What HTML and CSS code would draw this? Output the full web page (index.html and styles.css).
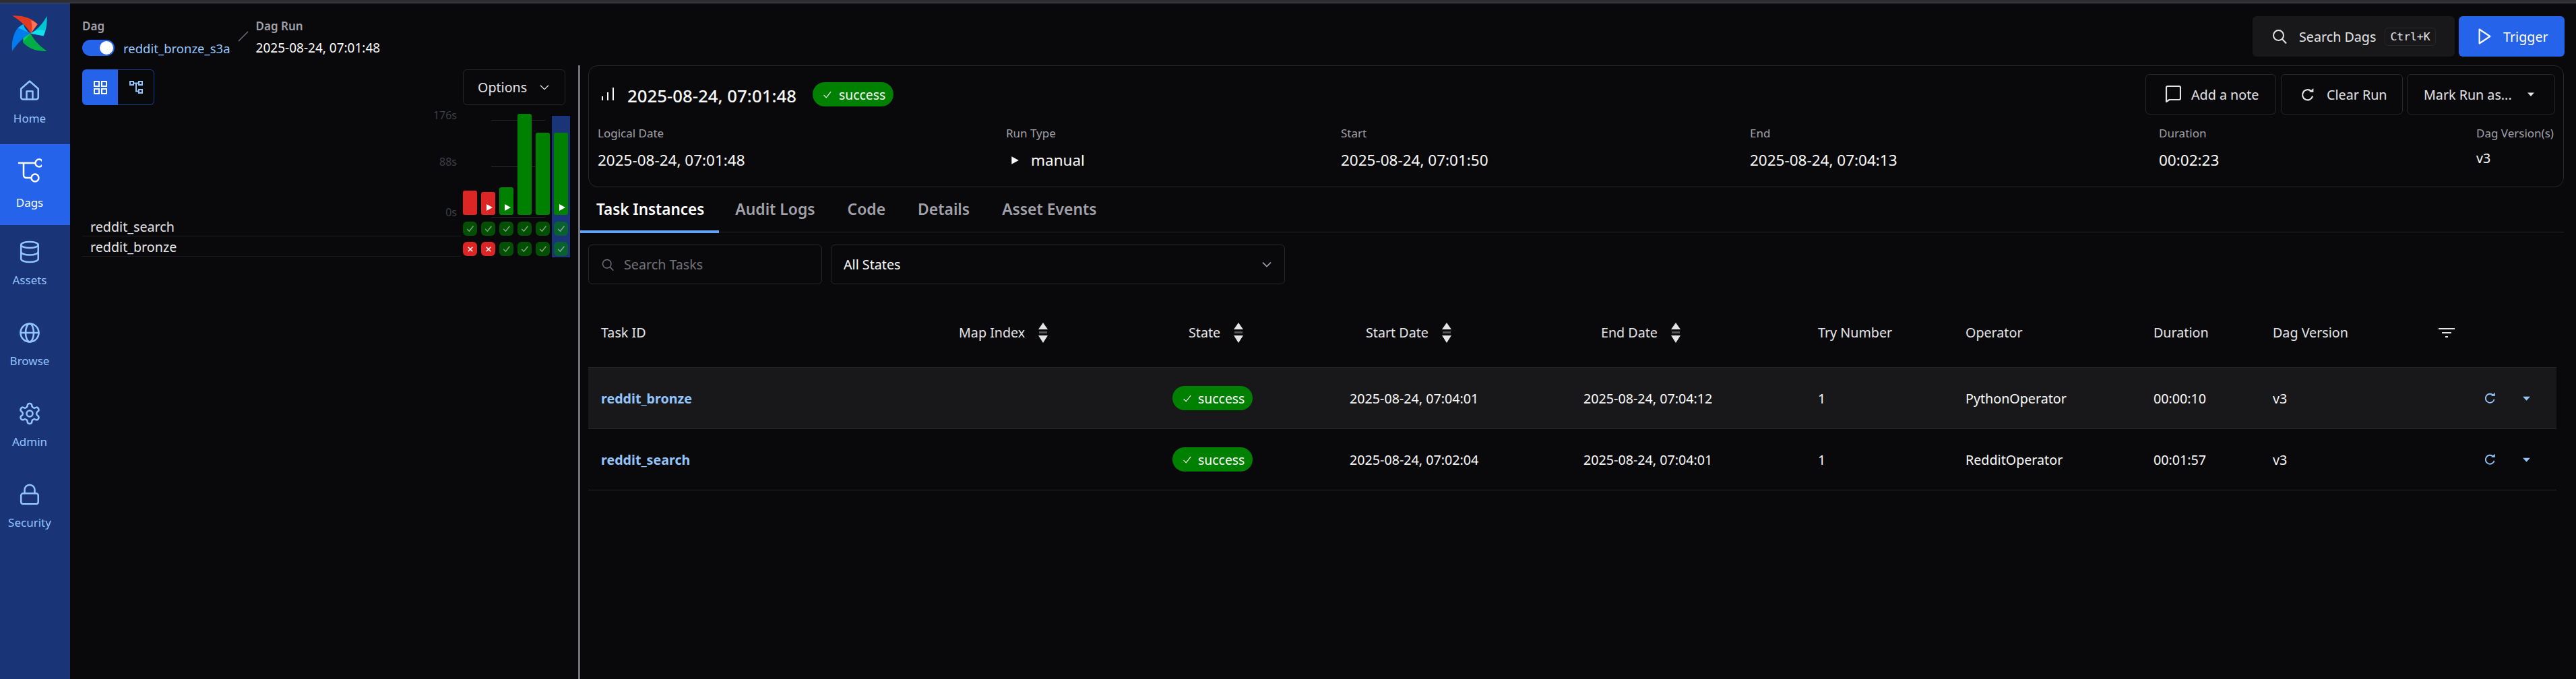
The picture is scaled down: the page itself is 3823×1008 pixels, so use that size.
FILE: index.html
```html
<!DOCTYPE html>
<html>
<head>
  <meta charset="UTF-8">
  <title>reddit_bronze_s3a - Dag Run</title>
  <link rel="stylesheet" href="styles.css">
</head>
<body>
  <svg class="sprite" xmlns="http://www.w3.org/2000/svg">
    <symbol id="i-search" viewBox="0 0 24 24"><circle cx="10.5" cy="10.5" r="7.5"/><path d="M16 16l6 6.5"/></symbol>
    <symbol id="i-check" viewBox="0 0 24 24"><path d="M4 13l6 6L21 5"/></symbol>
    <symbol id="i-x" viewBox="0 0 24 24"><path d="M4 4l16 16M20 4L4 20"/></symbol>
    <symbol id="i-reload" viewBox="0 0 24 24"><path d="M19.5 14.5A8.7 8.7 0 1 1 17 6"/><path class="solid" d="M13.5 7.5L21 8V1z"/></symbol>
    <symbol id="i-caret" viewBox="0 0 24 24"><path class="solid" d="M2 7h20L12 18z"/></symbol>
    <symbol id="i-chevron" viewBox="0 0 24 24"><path d="M3 7l9 9 9-9"/></symbol>
    <symbol id="i-play" viewBox="0 0 24 24"><path class="solid" d="M4 2l18 10L4 22z"/></symbol>
    <symbol id="i-sort" viewBox="0 0 16 32"><path class="solid" d="M8 1l7 10H1zM1 20h14L8 31z"/><path class="solid" d="M2 14h12v3H2z" opacity=".35"/></symbol>
  </svg>

  <div class="window-strip"></div>

  <div class="app">
    <nav class="sidebar">
      <div class="logo">
        <svg viewBox="52 66 162 166" width="54" height="55">
          <path fill="#e43921" d="M55 70C105 68 145 82 168 108L138 150C118 115 90 92 55 70z"/>
          <path fill="#ff7557" d="M138 150L168 108C160 100 150 94 138 90C146 110 146 132 138 150z"/>
          <path fill="#00c7d4" d="M210 72C212 105 208 135 195 160L138 150C170 130 192 105 210 72z"/>
          <path fill="#11e1ee" d="M138 150L195 160C198 152 201 146 203 138C180 130 158 134 138 150z"/>
          <path fill="#00ad46" d="M210 228C165 232 130 218 103 190L138 150C155 185 180 208 210 228z"/>
          <path fill="#04d659" d="M138 150L103 190C108 176 98 160 100 150C115 142 128 144 138 150z"/>
          <path fill="#017cee" d="M55 228C50 190 60 150 80 125L138 150C105 165 78 195 55 228z"/>
          <path fill="#0cb6ff" d="M138 150L80 125C88 118 95 112 105 108C110 125 122 142 138 150z"/>
        </svg>
      </div>
      <a class="nav-item">
        <svg class="nav-icon" viewBox="0 0 24 24"><path d="M3.5 10.5L12 3l8.500 7.500V19a2 2 0 0 1-2 2h-13a2 2 0 0 1-2-2z"/><path d="M9 21v-8h6v8"/></svg>
        <span>Home</span>
      </a>
      <a class="nav-item active">
        <svg class="nav-icon" viewBox="0 0 36 36"><path d="M2 7h24M9 7v18a4 4 0 0 0 4 4h7"/><circle cx="32" cy="7" r="5.500"/><circle cx="26" cy="29" r="5.500"/></svg>
        <span>Dags</span>
      </a>
      <a class="nav-item">
        <svg class="nav-icon" viewBox="0 0 24 24"><ellipse cx="12" cy="5" rx="8.500" ry="3"/><path d="M3.500 5v14a8.500 3 0 0 0 17 0V5"/><path d="M3.500 12a8.500 3 0 0 0 17 0"/></svg>
        <span>Assets</span>
      </a>
      <a class="nav-item">
        <svg class="nav-icon" viewBox="0 0 24 24"><circle cx="12" cy="12" r="9"/><ellipse cx="12" cy="12" rx="4" ry="9"/><path d="M3 12h18"/></svg>
        <span>Browse</span>
      </a>
      <a class="nav-item">
        <svg class="nav-icon" viewBox="0 0 24 24"><path d="M12.220 2h-.44a2 2 0 0 0-2 2v.18a2 2 0 0 1-1 1.730l-.43.250a2 2 0 0 1-2 0l-.15-.08a2 2 0 0 0-2.730.730l-.22.380a2 2 0 0 0 .730 2.730l.15.100a2 2 0 0 1 1 1.720v.510a2 2 0 0 1-1 1.740l-.15.090a2 2 0 0 0-.730 2.730l.22.380a2 2 0 0 0 2.730.730l.15-.08a2 2 0 0 1 2 0l.43.250a2 2 0 0 1 1 1.730V20a2 2 0 0 0 2 2h.44a2 2 0 0 0 2-2v-.18a2 2 0 0 1 1-1.730l.43-.25a2 2 0 0 1 2 0l.15.08a2 2 0 0 0 2.730-.730l.22-.39a2 2 0 0 0-.730-2.730l-.15-.08a2 2 0 0 1-1-1.740v-.5a2 2 0 0 1 1-1.740l.15-.09a2 2 0 0 0 .730-2.730l-.22-.38a2 2 0 0 0-2.730-.730l-.15.08a2 2 0 0 1-2 0l-.43-.25a2 2 0 0 1-1-1.730V4a2 2 0 0 0-2-2z"/><circle cx="12" cy="12" r="3"/></svg>
        <span>Admin</span>
      </a>
      <a class="nav-item">
        <svg class="nav-icon" viewBox="0 0 24 24"><rect x="3.500" y="11" width="17" height="10.500" rx="2"/><path d="M7 11V7.500a5 5 0 0 1 10 0V11"/></svg>
        <span>Security</span>
      </a>
    </nav>

    <main class="main">
      <header class="topbar">
        <div class="crumbs">
          <div class="crumb">
            <div class="crumb-label">Dag</div>
            <div class="crumb-value">
              <span class="switch"><span class="switch-knob"></span></span>
              <a class="dag-link">reddit_bronze_s3a</a>
            </div>
          </div>
          <svg class="crumb-sep" viewBox="0 0 16 16" width="16" height="16"><path d="M1 15L15 1"/></svg>
          <div class="crumb">
            <div class="crumb-label">Dag Run</div>
            <div class="crumb-value">2025-08-24, 07:01:48</div>
          </div>
        </div>
        <div class="top-actions">
          <button class="search-dags">
            <svg class="icon icon-search"><use href="#i-search"/></svg>
            <span>Search Dags</span>
            <kbd>Ctrl+K</kbd>
          </button>
          <button class="trigger">
            <svg viewBox="0 0 24 30" width="21" height="28"><path d="M3 3l18 12L3 27z"/></svg>
            <span>Trigger</span>
          </button>
        </div>
      </header>

      <div class="content">
        <section class="left-panel">
          <div class="left-toolbar">
            <div class="view-toggle">
              <button class="view-btn selected">
                <svg viewBox="0 0 20 20" width="20" height="20"><rect x="1" y="1" width="7" height="7"/><rect x="12" y="1" width="7" height="7"/><rect x="1" y="12" width="7" height="7"/><rect x="12" y="12" width="7" height="7"/></svg>
              </button>
              <button class="view-btn">
                <svg viewBox="0 0 20 20" width="20" height="20"><rect x="1" y="1" width="5" height="5"/><rect x="14" y="1" width="5" height="5"/><rect x="14" y="13" width="5" height="5"/><path d="M6 3.500h8M10 3.500V15.500h4"/></svg>
              </button>
            </div>
            <button class="options-btn">
              <span>Options</span>
              <svg class="icon icon-options"><use href="#i-chevron"/></svg>
            </button>
          </div>

          <div class="grid-area">
            <div class="tree">
              <div class="axis-label axis-top">176s</div>
              <div class="axis-label axis-mid">88s</div>
              <div class="axis-label axis-low">0s</div>
              <div class="tree-row">reddit_search</div>
              <div class="tree-row">reddit_bronze</div>
            </div>
            <div class="runs">
              <div class="gridline line-top"></div>
              <div class="gridline line-mid"></div>
              <div class="gridline line-low"></div>

              <div class="run">
                <div class="bar-slot"><div class="bar failed" style="height: 36px"></div></div>
                <div class="cell ok"><svg class="icon"><use href="#i-check"/></svg></div>
                <div class="cell bad"><svg class="icon"><use href="#i-x"/></svg></div>
              </div>
              <div class="run">
                <div class="bar-slot"><div class="bar failed" style="height: 34px"><svg class="bar-play"><use href="#i-play"/></svg></div></div>
                <div class="cell ok"><svg class="icon"><use href="#i-check"/></svg></div>
                <div class="cell bad"><svg class="icon"><use href="#i-x"/></svg></div>
              </div>
              <div class="run">
                <div class="bar-slot"><div class="bar" style="height: 41px"><svg class="bar-play"><use href="#i-play"/></svg></div></div>
                <div class="cell ok"><svg class="icon"><use href="#i-check"/></svg></div>
                <div class="cell ok"><svg class="icon"><use href="#i-check"/></svg></div>
              </div>
              <div class="run">
                <div class="bar-slot"><div class="bar" style="height: 150px"></div></div>
                <div class="cell ok"><svg class="icon"><use href="#i-check"/></svg></div>
                <div class="cell ok"><svg class="icon"><use href="#i-check"/></svg></div>
              </div>
              <div class="run">
                <div class="bar-slot"><div class="bar" style="height: 122px"></div></div>
                <div class="cell ok"><svg class="icon"><use href="#i-check"/></svg></div>
                <div class="cell ok"><svg class="icon"><use href="#i-check"/></svg></div>
              </div>
              <div class="run current">
                <div class="bar-slot"><div class="bar" style="height: 122px"><svg class="bar-play"><use href="#i-play"/></svg></div></div>
                <div class="cell ok"><svg class="icon"><use href="#i-check"/></svg></div>
                <div class="cell ok"><svg class="icon"><use href="#i-check"/></svg></div>
              </div>
            </div>
          </div>
        </section>

        <div class="divider"></div>

        <section class="right-panel">
          <div class="run-card">
            <div class="run-card-top">
              <div class="run-title">
                <svg class="run-bars" viewBox="0 0 20 22" width="20" height="22"><path d="M2 20v-6M10 20V8M18 20V1"/></svg>
                <h2>2025-08-24, 07:01:48</h2>
                <span class="badge badge-large"><svg class="icon"><use href="#i-check"/></svg>success</span>
              </div>
              <div class="run-actions">
                <button class="outline-btn btn-note">
                  <svg viewBox="0 0 26 34" width="26" height="34"><path d="M4 28V7a2 2 0 0 1 2-2h17a2 2 0 0 1 2 2v16a2 2 0 0 1-2 2H8.500z"/></svg>
                  <span>Add a note</span>
                </button>
                <button class="outline-btn btn-clear">
                  <svg class="icon icon-reload"><use href="#i-reload"/></svg>
                  <span>Clear Run</span>
                </button>
                <button class="outline-btn btn-mark">
                  <span>Mark Run as...</span>
                  <svg class="icon icon-caret"><use href="#i-caret"/></svg>
                </button>
              </div>
            </div>
            <div class="run-meta">
              <div><div class="meta-label">Logical Date</div><div class="meta-value">2025-08-24, 07:01:48</div></div>
              <div><div class="meta-label">Run Type</div><div class="meta-value run-type"><svg class="icon icon-manual"><use href="#i-play"/></svg>manual</div></div>
              <div><div class="meta-label">Start</div><div class="meta-value">2025-08-24, 07:01:50</div></div>
              <div><div class="meta-label">End</div><div class="meta-value">2025-08-24, 07:04:13</div></div>
              <div><div class="meta-label">Duration</div><div class="meta-value">00:02:23</div></div>
              <div><div class="meta-label">Dag Version(s)</div><div class="meta-value meta-small">v3</div></div>
            </div>
          </div>

          <div class="tabs">
            <a class="tab active">Task Instances</a>
            <a class="tab">Audit Logs</a>
            <a class="tab">Code</a>
            <a class="tab">Details</a>
            <a class="tab">Asset Events</a>
          </div>

          <div class="filters">
            <label class="task-search">
              <svg class="icon icon-task-search"><use href="#i-search"/></svg>
              <span>Search Tasks</span>
            </label>
            <div class="state-select">
              <span>All States</span>
              <svg class="icon icon-select"><use href="#i-chevron"/></svg>
            </div>
          </div>

          <div class="table">
            <div class="table-head">
              <div>Task ID</div>
              <div>Map Index<svg class="sort"><use href="#i-sort"/></svg></div>
              <div>State<svg class="sort"><use href="#i-sort"/></svg></div>
              <div>Start Date<svg class="sort"><use href="#i-sort"/></svg></div>
              <div>End Date<svg class="sort"><use href="#i-sort"/></svg></div>
              <div>Try Number</div>
              <div>Operator</div>
              <div>Duration</div>
              <div>Dag Version</div>
              <div>
                <svg class="columns-icon" viewBox="0 0 24 16" width="24" height="16"><path d="M0 2h24M5 8h14M10 14h4"/></svg>
              </div>
            </div>

            <div class="table-row hovered">
              <div><a class="task-link">reddit_bronze</a></div>
              <div></div>
              <div><span class="badge"><svg class="icon"><use href="#i-check"/></svg>success</span></div>
              <div>2025-08-24, 07:04:01</div>
              <div>2025-08-24, 07:04:12</div>
              <div>1</div>
              <div>PythonOperator</div>
              <div>00:00:10</div>
              <div>v3</div>
              <div class="row-actions">
                <svg class="icon icon-row-reload"><use href="#i-reload"/></svg>
                <svg class="icon icon-row-caret"><use href="#i-caret"/></svg>
              </div>
            </div>

            <div class="table-row">
              <div><a class="task-link">reddit_search</a></div>
              <div></div>
              <div><span class="badge"><svg class="icon"><use href="#i-check"/></svg>success</span></div>
              <div>2025-08-24, 07:02:04</div>
              <div>2025-08-24, 07:04:01</div>
              <div>1</div>
              <div>RedditOperator</div>
              <div>00:01:57</div>
              <div>v3</div>
              <div class="row-actions">
                <svg class="icon icon-row-reload"><use href="#i-reload"/></svg>
                <svg class="icon icon-row-caret"><use href="#i-caret"/></svg>
              </div>
            </div>
          </div>
        </section>
      </div>
    </main>
  </div>
</body>
</html>
```

FILE: styles.css
```css
* {
  box-sizing: border-box;
}
html, body {
  height: 100%;
}
body {
  margin: 0;
  display: flex;
  flex-direction: column;
  background-color: #09090b;
  color: #fafafa;
  font-family: "Noto Sans", "Open Sans", sans-serif;
  font-size: 19.7px;
  overflow: hidden;
}
button {
  font: inherit;
  color: inherit;
  background: none;
  border: none;
  padding: 0;
}
.sprite {
  display: none;
}
.icon {
  fill: none;
  stroke: currentColor;
  stroke-width: 2;
}
.solid {
  fill: currentColor;
  stroke: none;
}
.window-strip {
  flex: none;
  height: 5px;
  background-color: #2c2c31;
  border-bottom: 1px solid #55555b;
}
.app {
  flex: 1;
  display: flex;
  min-height: 0;
}

/* sidebar */
.sidebar {
  flex: none;
  width: 104px;
  background-color: #1a3478;
  color: #93c5fd;
}
.logo {
  height: 89px;
  padding: 17px 0 0 17px;
}
.nav-item {
  display: flex;
  flex-direction: column;
  align-items: center;
  height: 120px;
  padding-top: 22px;
  padding-right: 16px;
  gap: 12px;
  font-size: 17px;
  line-height: 24px;
}
.nav-icon {
  width: 36px;
  height: 36px;
  fill: none;
  stroke: currentColor;
  stroke-width: 1.7;
  stroke-linecap: round;
  stroke-linejoin: round;
}
.nav-item.active {
  background-color: #2563eb;
  color: #fff;
  gap: 18px;
  padding-top: 21px;
}
.nav-item.active .nav-icon {
  stroke-width: 2.500;
}

/* top row */
.main {
  flex: 1;
  min-width: 0;
  display: flex;
  flex-direction: column;
}
.topbar {
  flex: none;
  height: 92px;
  display: flex;
  justify-content: space-between;
  padding: 19px 17px 0 18px;
}
.crumbs {
  display: flex;
  align-items: flex-start;
  padding-top: 3px;
}
.crumb-label {
  font-size: 17px;
  font-weight: 600;
  line-height: 24px;
  color: #a1a1aa;
}
.crumb-value {
  display: flex;
  align-items: center;
  gap: 13px;
  height: 28px;
  margin-top: 6px;
  font-size: 19px;
}
.crumb-sep {
  margin: 19px 11px 0 11px;
  fill: none;
  stroke: #71717a;
  stroke-width: 1.500;
}
.switch {
  display: block;
  width: 48px;
  height: 24px;
  padding: 2px;
  border-radius: 12px;
  background-color: #2563eb;
}
.switch-knob {
  display: block;
  width: 20px;
  height: 20px;
  margin-left: 24px;
  border-radius: 50%;
  background-color: #fff;
}
.dag-link {
  color: #93c5fd;
  font-size: 18.500px;
}
.top-actions {
  display: flex;
  gap: 6px;
  height: 60px;
}
.search-dags {
  display: flex;
  align-items: center;
  width: 300px;
  padding-left: 28px;
  border-radius: 6px;
  background-color: #18181b;
  color: #e4e4e7;
}
.icon-search {
  width: 24px;
  height: 24px;
  margin-right: 17px;
}
kbd {
  display: block;
  margin-left: 13px;
  padding: 0 7px;
  height: 27px;
  line-height: 25px;
  border: 1px solid #27272a;
  border-radius: 5px;
  font-family: "DejaVu Sans Mono", monospace;
  font-size: 16.400px;
}
.trigger {
  display: flex;
  align-items: center;
  gap: 17px;
  width: 157px;
  padding-left: 28px;
  border-radius: 6px;
  background-color: #2563eb;
  color: #fff;
}
.trigger svg {
  fill: none;
  stroke: #fff;
  stroke-width: 2.500;
  stroke-linejoin: round;
}

/* left side */
.content {
  flex: 1;
  display: flex;
  min-height: 0;
}
.left-panel {
  flex: none;
  width: 754px;
  padding: 6px 12px 0 18px;
}
.left-toolbar {
  display: flex;
  justify-content: space-between;
  height: 53px;
  padding-right: 7px;
}
.view-toggle {
  display: flex;
}
.view-btn {
  display: flex;
  align-items: center;
  justify-content: center;
  width: 54px;
  border: 1px solid #1e3a8a;
  border-left: none;
  border-radius: 0 6px 6px 0;
  color: #93c5fd;
}
.view-btn.selected {
  width: 53px;
  border: none;
  border-radius: 6px 0 0 6px;
  background-color: #2563eb;
  color: #fff;
}
.view-btn svg {
  fill: none;
  stroke: currentColor;
  stroke-width: 2;
}
.options-btn {
  display: flex;
  align-items: center;
  gap: 18px;
  width: 152px;
  padding-left: 21px;
  border: 1px solid #27272a;
  border-radius: 6px;
  color: #e4e4e7;
}
.icon-options {
  width: 16px;
  height: 16px;
}
.grid-area {
  display: flex;
  align-items: flex-end;
  margin-top: 16px;
  height: 210px;
}
.tree {
  position: relative;
  flex: 1;
  height: 100%;
  display: flex;
  flex-direction: column;
  justify-content: flex-end;
  padding-bottom: 1px;
}
.tree-row {
  height: 30px;
  padding-left: 12px;
  border-bottom: 1px solid #1c1c1f;
  color: #e4e4e7;
  line-height: 32px;
}
.axis-label {
  position: absolute;
  right: 6px;
  color: #3f3f46;
  font-size: 16px;
  line-height: 24px;
}
.axis-top { top: -13px; }
.axis-mid { top: 56px; }
.axis-low { top: 131px; }

.runs {
  position: relative;
  display: flex;
  height: 100%;
}
.gridline {
  position: absolute;
  left: 45px;
  width: 80px;
  height: 1px;
  background-color: #27272a;
}
.line-top { top: 6px; }
.line-mid { top: 75px; }
.line-low { top: 150px; }
.run {
  position: relative;
  width: 27px;
  padding: 0 3px;
}
.run.current {
  background-color: #1a3478;
}
.bar-slot {
  display: flex;
  align-items: flex-end;
  height: 147px;
  margin-bottom: 10px;
}
.bar {
  position: relative;
  width: 100%;
  display: flex;
  justify-content: center;
  border-radius: 3px;
  background-color: #008000;
  color: #fff;
}
.bar.failed {
  background-color: #dc2626;
}
.bar-play {
  position: absolute;
  bottom: 5px;
  left: 6px;
  width: 12px;
  height: 12px;
}
.cell {
  display: flex;
  align-items: center;
  justify-content: center;
  height: 21px;
  margin-bottom: 9px;
  border-radius: 6px;
  background-color: rgba(0, 128, 0, 0.6);
  color: rgba(255, 255, 255, 0.5);
}
.cell .icon {
  width: 13px;
  height: 13px;
  stroke-width: 2.500;
}
.cell.bad {
  background-color: #dc2626;
  color: #fff;
}
.cell.bad .icon {
  width: 10px;
  height: 10px;
  stroke-width: 3.500;
}
.divider {
  flex: none;
  width: 3px;
  background-color: #71717a;
}

/* run details */
.right-panel {
  flex: 1;
  min-width: 0;
  padding-right: 18px;
}
.run-card {
  margin-left: 12px;
  height: 181px;
  padding: 12px 12px 0 13px;
  border: 1px solid #27272a;
  border-radius: 14px;
}
.run-card-top {
  display: flex;
  justify-content: space-between;
  height: 60px;
}
.run-title {
  display: flex;
  align-items: center;
}
.run-bars {
  margin: 0 19px 0 5px;
  fill: none;
  stroke: #fafafa;
  stroke-width: 2;
}
.run-title h2 {
  margin: 0 24px 0 0;
  font-size: 25.800px;
  font-weight: 500;
  line-height: 36px;
  position: relative;
  top: 2px;
}
.badge {
  display: inline-flex;
  align-items: center;
  gap: 9px;
  height: 36px;
  padding: 0 12px 0 14px;
  border-radius: 18px;
  background-color: #008000;
  color: #fff;
  font-size: 19.400px;
}
.badge .icon {
  width: 15px;
  height: 15px;
  stroke-width: 1.800;
}
.badge-large {
  gap: 10px;
}
.run-actions {
  display: flex;
  gap: 6px;
}
.outline-btn {
  display: flex;
  align-items: center;
  height: 60px;
  border: 1px solid #27272a;
  border-radius: 6px;
  color: #e4e4e7;
}
.btn-note {
  width: 194px;
  padding-left: 26px;
  gap: 15px;
  margin-right: 1px;
}
.btn-note svg {
  fill: none;
  stroke: currentColor;
  stroke-width: 2.200;
  stroke-linejoin: round;
}
.btn-clear {
  width: 181px;
  padding-left: 29px;
  gap: 17px;
}
.icon-reload {
  width: 21px;
  height: 21px;
  stroke-width: 2.500;
}
.btn-mark {
  width: 220px;
  padding-left: 24px;
  gap: 22px;
}
.icon-caret {
  width: 12px;
  height: 12px;
}
.run-meta {
  display: grid;
  grid-template-columns: 606px 497px 607px 607px 471px 1fr;
  margin-top: 16px;
}
.meta-label {
  font-size: 17px;
  line-height: 24px;
  color: #a1a1aa;
}
.meta-value {
  margin-top: 12px;
  font-size: 22.500px;
  line-height: 32px;
}
.meta-small {
  margin-top: 9px;
  font-size: 19.700px;
}
.run-type {
  display: flex;
  align-items: center;
  gap: 17px;
  padding-left: 6px;
}
.icon-manual {
  width: 14px;
  height: 16px;
}

/* tabs */
.tabs {
  display: flex;
  height: 67px;
  border-bottom: 1px solid #27272a;
}
.tab {
  display: block;
  height: 70px;
  padding: 20px 24px 0 24px;
  color: #a1a1aa;
  font-size: 22.900px;
  font-weight: 600;
  line-height: 26px;
}
.tab.active {
  height: 68px;
  padding: 20px 22px 0 24px;
  border-bottom: 4px solid #60a5fa;
  color: #fff;
  font-size: 22.500px;
}

/* filters and table */
.filters {
  display: flex;
  gap: 13px;
  margin: 18px 0 0 12px;
}
.task-search, .state-select {
  display: flex;
  align-items: center;
  height: 59px;
  border: 1px solid #27272a;
  border-radius: 6px;
}
.task-search {
  width: 347px;
  padding-left: 18px;
  gap: 14px;
  color: #71717a;
}
.icon-task-search {
  width: 20px;
  height: 20px;
  stroke-width: 1.800;
}
.state-select {
  width: 674px;
  padding: 0 18px;
  justify-content: space-between;
}
.icon-select {
  width: 16px;
  height: 16px;
  color: #a1a1aa;
  stroke-width: 2.500;
}
.table {
  margin: 0 11px 0 12px;
}
.table-head, .table-row {
  display: grid;
  align-items: center;
}
.table-head > div, .table-row > div {
  padding-left: 19px;
  display: flex;
  align-items: center;
}
.table-head {
  grid-template-columns: 531px 341px 263px 349px 322px 219px 279px 177px 246px 1fr;
  height: 124px;
  border-bottom: 1px solid #27272a;
  color: #e4e4e7;
}
.table-head > div {
  position: relative;
  top: 10px;
}
.sort {
  width: 16px;
  height: 32px;
  margin-left: 19px;
  color: #e4e4e7;
}
.columns-icon {
  fill: none;
  stroke: #e4e4e7;
  stroke-width: 2;
}
.table-row {
  grid-template-columns: 531px 317px 263px 347px 348px 219px 279px 177px 314px 1fr;
  height: 91px;
  border-bottom: 1px solid #27272a;
}
.table-row.hovered {
  background-color: #18181b;
}
.task-link {
  color: #93c5fd;
  font-weight: 700;
}
.row-actions {
  gap: 38px;
  color: #93c5fd;
}
.icon-row-reload {
  width: 18px;
  height: 18px;
  stroke-width: 2.500;
}
.icon-row-caret {
  width: 13px;
  height: 13px;
}
```
